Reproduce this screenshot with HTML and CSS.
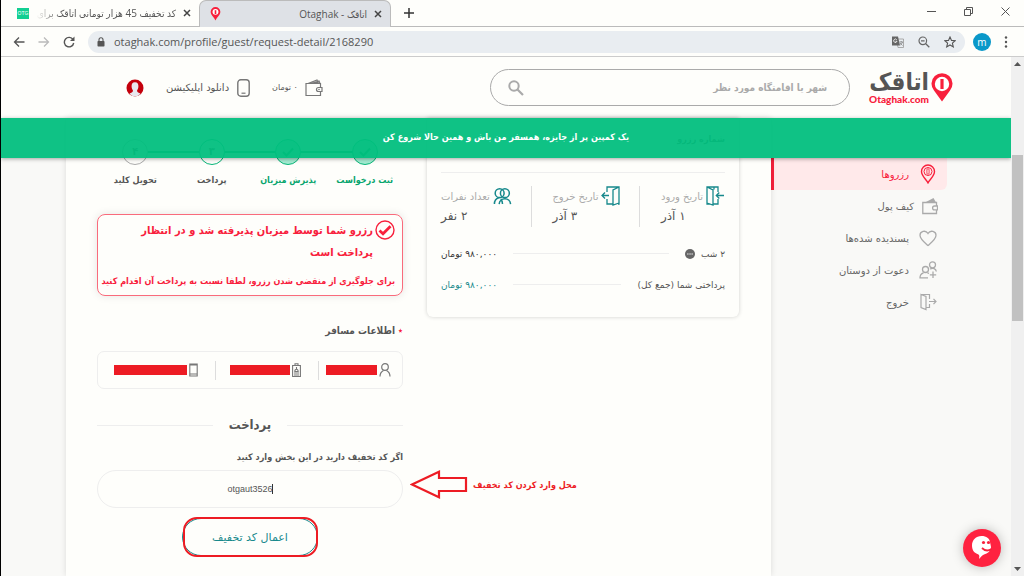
FILE: index.html
```html
<!DOCTYPE html>
<html lang="fa">
<head>
<meta charset="utf-8">
<title>اتاقک - Otaghak</title>
<link rel="stylesheet" href="styles.css">
</head>
<body>
<div class="browser">
  <div class="tabstrip">
    <div class="tab">
      <span class="favicon-otg">OTG</span>
      <span class="tab-title tab-title--fade" dir="rtl">کد تخفیف 45 هزار تومانی اتاقک برای</span>
      <button class="icon-btn" aria-label="Close tab"><svg width="8" height="8" viewBox="0 0 8 8"><path d="M1 1l6 6M7 1l-6 6" stroke="#444" stroke-width="1.5"/></svg></button>
    </div>
    <div class="tab tab--active">
      <svg width="11" height="14" viewBox="0 0 20 26"><path d="M10 25C7 19 1 15 1 9a9 9 0 0 1 18 0c0 6-6 10-9 16z" fill="#f8203c"/><circle cx="10" cy="9" r="5.5" fill="#fff"/><path d="M10 6v7" stroke="#f8203c" stroke-width="3"/></svg>
      <span class="tab-title" dir="rtl">اتاقک - Otaghak</span>
      <button class="icon-btn" aria-label="Close tab"><svg width="8" height="8" viewBox="0 0 8 8"><path d="M1 1l6 6M7 1l-6 6" stroke="#444" stroke-width="1.5"/></svg></button>
    </div>
    <button class="icon-btn new-tab" aria-label="New tab"><svg width="10" height="10" viewBox="0 0 10 10"><path d="M5 0v10M0 5h10" stroke="#333" stroke-width="1.5"/></svg></button>
    <div class="window-controls">
      <button class="icon-btn" aria-label="Minimize"><svg width="9" height="9" viewBox="0 0 9 9"><path d="M0 4.500h9" stroke="#555"/></svg></button>
      <button class="icon-btn" aria-label="Restore"><svg width="9" height="9" viewBox="0 0 9 9"><path d="M.5 2.500h6v6h-6zM2.500 2.500v-2h6v6h-2" fill="none" stroke="#555"/></svg></button>
      <button class="icon-btn" aria-label="Close"><svg width="9" height="9" viewBox="0 0 9 9"><path d="M.5.5l8 8M8.500.5l-8 8" stroke="#555"/></svg></button>
    </div>
  </div>

  <div class="toolbar">
    <button class="icon-btn" aria-label="Back"><svg width="12" height="12" viewBox="0 0 12 12"><path d="M11.500 6H1.500M6 1.500L1.500 6 6 10.500" fill="none" stroke="#555" stroke-width="1.300"/></svg></button>
    <button class="icon-btn" aria-label="Forward"><svg width="12" height="12" viewBox="0 0 12 12"><path d="M.5 6h10M6 1.500L10.500 6 6 10.500" fill="none" stroke="#bbb" stroke-width="1.300"/></svg></button>
    <button class="icon-btn" aria-label="Reload"><svg width="12" height="12" viewBox="0 0 12 12"><path d="M10 3.500A4.700 4.700 0 1 0 10.700 7" fill="none" stroke="#555" stroke-width="1.400"/><path d="M11.500.5V5H7z" fill="#555"/></svg></button>
    <div class="omnibox">
      <svg width="8" height="10" viewBox="0 0 8 10"><rect x=".5" y="4" width="7" height="5.500" rx=".7" fill="#555"/><path d="M2 4.500V2.700a2 2 0 0 1 4 0v1.800" fill="none" stroke="#555" stroke-width="1.100"/></svg>
      <input class="url" type="text" aria-label="Address" value="otaghak.com/profile/guest/request-detail/2168290">
      <div class="omnibox-icons">
        <svg width="12" height="12" viewBox="0 0 12 12"><path d="M4.500 3h7v8.500H6z" fill="none" stroke="#999" stroke-width=".8"/><path d="M0 .5h6L8 9.500H0z" fill="#666"/><path d="M4.800 3.800a1.700 1.700 0 1 0 .2 1.500H3.500" fill="none" stroke="#fff" stroke-width=".8"/><path d="M7.500 6h3.500M9.200 5v1M10.500 6c-.4 1.500-1.500 2.500-2.300 3M8 7l2.500 2.500" fill="none" stroke="#777" stroke-width=".7"/></svg>
        <svg width="12" height="12" viewBox="0 0 12 12"><circle cx="4.800" cy="4.800" r="3.800" fill="none" stroke="#666" stroke-width="1.200"/><path d="M3 4.800h3.600M7.500 7.500L11.300 11.300" stroke="#666" stroke-width="1.300"/></svg>
        <svg width="12" height="12" viewBox="0 0 12 12"><path d="M6 1l1.500 3.400 3.700.3-2.800 2.500.9 3.700L6 9l-3.300 1.900.9-3.700L.8 4.700l3.700-.3z" fill="none" stroke="#555" stroke-width="1.100"/></svg>
      </div>
    </div>
    <button class="profile">m</button>
    <button class="icon-btn" aria-label="Menu"><svg width="4" height="12" viewBox="0 0 4 12"><g fill="#555"><circle cx="2" cy="1.500" r="1.200"/><circle cx="2" cy="6" r="1.200"/><circle cx="2" cy="10.500" r="1.200"/></g></svg></button>
  </div>

  <div class="viewport">
    <div class="page" dir="rtl">
      <header class="site-header">
        <div class="header-start">
          <a class="logo" href="#">
            <svg width="22" height="29" viewBox="0 0 22 29"><path d="M11 28.500L3 17.500A10.500 10.500 0 1 1 19 17.500z" fill="#f8203c"/><circle cx="11" cy="11" r="7.200" fill="#fff"/><path d="M11 6v10" stroke="#f8203c" stroke-width="3.200"/></svg>
            <span class="logo-words"><span class="logo-fa">اتاقک</span><span class="logo-en">Otaghak.com</span></span>
          </a>
          <label class="search">
            <input type="text" aria-label="جستجو" placeholder="شهر یا اقامتگاه مورد نظر">
            <svg width="16" height="16" viewBox="0 0 16 16"><circle cx="6" cy="6" r="4.700" fill="none" stroke="#aaa" stroke-width="2"/><path d="M9.500 9.500l5.500 5.500" stroke="#aaa" stroke-width="2.200"/></svg>
          </label>
        </div>
        <nav class="header-end">
          <a class="header-link header-link--small" href="#"><svg width="18" height="18" viewBox="0 0 18 18"><path d="M15.500 8.500V4.500H1v12h14.500v-4M3 4.500l9-3.500 1.500 3.500M6 4.500L14 2l1 2.500M17 8.500h-3.500a2 2 0 0 0 0 4H17z" fill="none" stroke="#777" stroke-width="1.200"/><circle cx="14" cy="10.500" r=".8" fill="#777"/></svg><span>۰ تومان</span></a>
          <a class="header-link" href="#"><svg width="13" height="18" viewBox="0 0 13 18"><rect x=".8" y=".8" width="11.400" height="16.400" rx="3" fill="none" stroke="#777" stroke-width="1.400"/><path d="M4.500 14.200h4" stroke="#777" stroke-width="1.200"/></svg><span>دانلود اپلیکیشن</span></a>
          <a href="#" aria-label="پروفایل" class="avatar"><svg width="18" height="18" viewBox="0 0 18 18"><circle cx="9" cy="9" r="8.500" fill="#c4000c"/><path d="M9 3.200c-2.700 0-3.600 2-3.400 4.500.1 2 .9 3 1.300 3.500.2 1.500-.4 2.300-3.400 3.400C4.800 16.500 7 17.500 9 17.500s4.200-1 5.500-2.900c-3-1.100-3.600-1.900-3.400-3.400.4-.5 1.200-1.500 1.300-3.500.2-2.500-.7-4.500-3.400-4.500z" fill="#e8e8ee"/></svg></a>
        </nav>
      </header>

      <div class="content">
        <div class="banner">یک کمپین پر از جایزه، همسفر من باش و همین حالا شروع کن</div>

        <nav class="sidebar">
          <a class="side-item side-item--active" href="#"><svg width="18" height="20" viewBox="0 0 18 20"><g fill="none" stroke="currentColor" stroke-width="1.400"><path d="M9 18.800C7 15 2.500 12 2.500 7.500a6.500 6.500 0 0 1 13 0c0 4.500-4.500 7.500-6.500 11.300z"/><circle cx="9" cy="7.500" r="4" stroke-width="1"/><rect x="7.900" y="4.800" width="2.200" height="5.400" rx="1" stroke-width=".8"/></g></svg><span>رزروها</span></a>
          <a class="side-item side-item--wallet" href="#"><svg width="16" height="18" viewBox="0 0 16 18"><path d="M14.500 8.500V5.500H.8v11h13.700v-3M15.500 9h-3a1.900 1.900 0 0 0 0 3.800h3z" fill="none" stroke="#aaa" stroke-width="1.300"/><path d="M3 5.500L11.500 1l2.500 4.500z" fill="#aaa"/></svg><span>کیف پول</span></a>
          <a class="side-item" href="#"><svg width="18" height="18" viewBox="0 0 18 18"><path d="M9 16.500C5 13 1 10 1 6.200 1 2.500 6.500.5 9 4.500c2.500-4 8-2 8 1.700 0 3.800-4 6.800-8 10.300z" fill="none" stroke="#aaa" stroke-width="1.300"/></svg><span>پسندیده شده‌ها</span></a>
          <a class="side-item" href="#"><svg width="18" height="18" viewBox="0 0 18 18"><g fill="none" stroke="#aaa" stroke-width="1.300"><circle cx="6.500" cy="8.500" r="3"/><circle cx="13.500" cy="3.800" r="3"/><path d="M9 16.800H1c0-3 2-4.500 3.500-5M8.500 11.800l1.500.7M11 8c3-1.500 6-.5 6.300 2.500M14 10.500v6.500M10.800 13.800h6.400"/></g></svg><span>دعوت از دوستان</span></a>
          <a class="side-item" href="#"><svg width="18" height="18" viewBox="0 0 18 18"><path d="M2 1.500h8.500V6M2 1.500l5 2v13l-5-2zM7 14.500h3.500V11M10 8.500h7M14.500 5.800L17 8.500l-2.500 2.700" fill="none" stroke="#aaa" stroke-width="1.200"/></svg><span>خروج</span></a>
        </nav>

        <main class="panel">
          <section class="booking">
            <h2 class="booking-no">شماره رزرو</h2>
            <dl class="facts">
              <div class="fact"><dt><svg width="19" height="20" viewBox="0 0 19 20"><path d="M8 3.500V1H1v17h3M1 1l6 3v15l-6-2M8 1h4v5M12 13v5H7M18 9.500H10M13.300 6.500l-3 3 3 3" fill="none" stroke="#17898c" stroke-width="1.300"/></svg>تاریخ ورود</dt><dd>۱ آذر</dd></div>
              <div class="fact"><dt><svg width="19" height="20" viewBox="0 0 19 20"><path d="M6 6V1h12v17h-1M18 1l-6 3v15l6-2M6 13v5h6M.8 9.500H8M4 6.500l-3 3 3 3" fill="none" stroke="#17898c" stroke-width="1.300"/></svg>تاریخ خروج</dt><dd>۳ آذر</dd></div>
              <div class="fact"><dt><svg width="19" height="20" viewBox="0 0 20 20"><g fill="none" stroke="#17898c" stroke-width="1.600"><circle cx="7" cy="7" r="4.700"/><circle cx="12.500" cy="7" r="4.700"/><path d="M1.500 18.500c0-4 2-6 4.500-6.500M6.500 18.500c.5-7.500 11.500-7.500 12 0M10 18.500c0-2-.6-4-1.800-5.300"/></g></svg>تعداد نفرات</dt><dd>۲ نفر</dd></div>
            </dl>
            <div class="price"><span>۲ شب</span><button class="more" aria-label="جزئیات"><svg width="10" height="10" viewBox="0 0 10 10"><circle cx="5" cy="5" r="5" fill="#666"/><path d="M2.200 5h1.300M4.400 5h1.300M6.500 5h1.300" stroke="#fff" stroke-width="1.200"/></svg></button><i class="rule"></i><b>۹۸۰,۰۰۰ تومان</b></div>
            <div class="price price--total"><span>پرداختی شما (جمع کل)</span><i class="rule"></i><b>۹۸۰,۰۰۰ تومان</b></div>
          </section>

          <section class="checkout">
            <ol class="steps">
              <li class="step step--done"><span class="dot"><svg width="12" height="10" viewBox="0 0 12 10"><path d="M1 5l3.500 3.500L11 1.500" fill="none" stroke="#08a56d" stroke-width="2"/></svg></span>ثبت درخواست</li>
              <li class="step step--done"><span class="dot"><svg width="12" height="10" viewBox="0 0 12 10"><path d="M1 5l3.500 3.500L11 1.500" fill="none" stroke="#08a56d" stroke-width="2"/></svg></span>پذیرش میزبان</li>
              <li class="step step--current"><span class="dot">۳</span>پرداخت</li>
              <li class="step"><span class="dot">۴</span>تحویل کلید</li>
            </ol>

            <div class="notice">
              <div class="notice-head">
                <svg width="20" height="20" viewBox="0 0 20 20"><circle cx="10" cy="10" r="9" fill="none" stroke="#f8203c" stroke-width="1.400"/><path d="M4.500 10.500l3.500 3.200 7.500-7.500" fill="none" stroke="#f8203c" stroke-width="2.800"/></svg>
                <h3>رزرو شما توسط میزبان پذیرفته شد و در انتظار پرداخت است</h3>
              </div>
              <p>برای جلوگیری از منقضی شدن رزرو، لطفا نسبت به پرداخت آن اقدام کنید</p>
            </div>

            <h4 class="guest-title"><span class="star">٭</span> اطلاعات مسافر</h4>
            <div class="guest">
              <div class="guest-cell"><svg width="12" height="14" viewBox="0 0 12 14"><circle cx="6" cy="4" r="3.300" fill="none" stroke="#777" stroke-width="1.200"/><path d="M1 13.500c0-3.500 1.500-5 3.500-6M11 13.500c0-3.500-1.500-5-3.500-6" fill="none" stroke="#777" stroke-width="1.200"/></svg><span class="redact redact--short"></span></div>
              <div class="guest-cell"><svg width="9" height="14" viewBox="0 0 9 14"><path d="M.6 2.500h7.800v11H.6zM3 2.500V.8h3v1.700M2 10h5M2 12h5M4.500 4v2M2.800 8.500c0-3 3.400-3 3.400 0z" fill="none" stroke="#777" stroke-width="1.100"/></svg><span class="redact redact--mid"></span></div>
              <div class="guest-cell"><svg width="9" height="14" viewBox="0 0 9 14"><path d="M.8 1h7.400v12H.8zM.8 2h7.400M.8 11h7.400" fill="none" stroke="#777" stroke-width="1.100"/></svg><span class="redact redact--long"></span></div>
            </div>

            <h3 class="pay-title"><span>پرداخت</span></h3>
            <label class="code-label" for="code">اگر کد تخفیف دارید در این بخش وارد کنید</label>
            <div class="code-box">
              <input id="code" class="code" type="text" value="otgaut3526" dir="ltr">
              <i class="caret"></i>
              <div class="callout">
                <span>محل وارد کردن کد تخفیف</span>
                <svg width="58" height="29" viewBox="0 0 58 29"><path d="M2 14.500L29 1.800V8h27v13H29v6.200z" fill="none" stroke="#ed1c24" stroke-width="2.200"/></svg>
              </div>
            </div>
            <div class="apply-wrap"><button class="apply">اعمال کد تخفیف</button></div>
          </section>
        </main>
      </div>

      <button class="chat" aria-label="گفتگو"><svg width="22" height="26" viewBox="0 0 22 26"><path d="M10.500 1c5 0 8 2.500 8.500 6l1 5c0 4-3.500 6.500-7 7.500-2 .7-3 2.500-5 4.500.5-2.500.5-3.800-.5-4.500C3 18 1 15 1 10.500 1 5 5 1 10.500 1z" fill="#fff"/><path d="M11 13c3 3 6.500 3 9.500 1" fill="none" stroke="#f8203c" stroke-width="1.800"/><circle cx="12.500" cy="7.500" r="1.600" fill="#f8203c"/><circle cx="17.500" cy="7.500" r="1.600" fill="#f8203c"/></svg></button>
    </div>
    <div class="scrollbar">
      <svg width="7" height="4" viewBox="0 0 7 4"><path d="M3.500 0L7 4H0z" fill="#555"/></svg>
      <div class="track"><div class="thumb"></div></div>
      <svg width="7" height="4" viewBox="0 0 7 4"><path d="M3.500 4L7 0H0z" fill="#555"/></svg>
    </div>
  </div>
</div>
</body>
</html>
```
FILE: styles.css
```css
* { box-sizing: border-box; }
body, h2, h3, h4, p, dl, dd, ol { margin: 0; padding: 0; }
body { font-family: "DejaVu Sans", sans-serif; font-size: 9px; color: #555; }
button { font: inherit; border: 0; background: none; padding: 0; }
input { font: inherit; border: 0; background: none; padding: 0; outline: 0; min-width: 0; }
a { color: inherit; text-decoration: none; }
svg { display: block; flex: none; }
.icon-btn { display: flex; }

.browser { display: flex; flex-direction: column; height: 100vh; overflow: hidden; background: #fefefb; border-left: 1px solid #000; }

/* Browser chrome */
.tabstrip { display: flex; align-items: center; height: 27px; flex: none; border-bottom: 1px solid #bbb; }
.tab { display: flex; align-items: center; gap: 7px; width: 198px; height: 27px; padding: 0 8px 0 16px; }
.tab--active { width: 192px; padding: 0 8px 0 10px; background: #dee1e6; border: 1px solid #bbb; border-bottom: 0; border-radius: 7px 7px 0 0; }
.tab-title { flex: 1; overflow: hidden; white-space: nowrap; font-family: "Open Sans", "DejaVu Sans Condensed", "DejaVu Sans", sans-serif; font-size: 10px; }
.tab-title--fade { mask-image: linear-gradient(to right, transparent, #000 24px); }
.favicon-otg { width: 12px; height: 11px; background: #12cf92; color: #fff; font: 5px/11px "Liberation Sans", sans-serif; text-align: center; }
.new-tab { margin-left: 13px; }
.window-controls { display: flex; gap: 28px; margin-left: auto; padding: 0 14px 4px 0; }
.toolbar { display: flex; align-items: center; gap: 13px; height: 30px; flex: none; padding: 0 16px 0 12px; border-bottom: 1px solid #ccc; }
.omnibox { display: flex; flex: 1; align-items: center; gap: 9px; height: 22px; padding: 0 9px; border-radius: 11px; background: #e9edf1; }
.url { flex: 1; font-family: "Open Sans", sans-serif; font-size: 11px; color: #555; }
.omnibox-icons { display: flex; gap: 14px; }
.profile { width: 18px; height: 18px; margin-left: -5px; border-radius: 50%; background: #0a98c9; color: #fff; font: 10px/16px "Open Sans", sans-serif; }

/* Viewport and scrollbar */
.viewport { display: flex; flex: 1; min-height: 0; }
.page { position: relative; display: flex; flex-direction: column; flex: 1; min-width: 0; overflow: hidden; background: #f9f9f7; }
.scrollbar { display: flex; flex-direction: column; align-items: center; width: 13px; padding: 5px 0; background: #f0f0f0; }
.track { flex: 1; align-self: stretch; padding: 89px 1px 0; }
.thumb { height: 166px; background: #c1c1c1; }

/* Site header */
.site-header { display: flex; justify-content: space-between; align-items: center; flex: none; height: 61px; padding: 0 58px 0 125px; background: #fefefb; }
.header-start, .header-end { display: flex; align-items: center; }
.header-start { gap: 19px; }
.header-end { gap: 22px; }
.logo { display: flex; align-items: center; gap: 2px; }
.logo-words { display: flex; flex-direction: column; align-items: flex-start; }
.logo-fa { font-family: "DejaVu Sans Condensed", "DejaVu Sans", sans-serif; font-size: 24px; line-height: 22px; font-weight: bold; color: #555; }
.logo-en { font-family: Lato, sans-serif; font-size: 10px; line-height: 12px; font-weight: 900; color: #f8203c; }
.search { display: flex; align-items: center; width: 360px; height: 37px; padding: 0 22px 0 17px; border: 1px solid #aaa; border-radius: 19px; }
.search input { flex: 1; font-family: "DejaVu Sans Condensed", "DejaVu Sans", sans-serif; font-size: 10px; font-weight: bold; }
.search input::placeholder { color: #aaa; opacity: 1; }
.header-link { display: flex; align-items: center; gap: 8px; font-size: 10px; }
.header-link--small { gap: 7px; font-size: 8px; }

/* Content */
.content { position: relative; display: flex; flex: 1; min-height: 0; }
.banner, .booking-no, .steps, .notice, .guest-title, .pay-title, .code-label, .callout { font-family: "DejaVu Sans Condensed", "DejaVu Sans", sans-serif; }
.banner { position: absolute; top: 0; left: 0; right: 0; z-index: 2; height: 40px; background: rgba(0, 190, 125, .94); box-shadow: 0 1px 4px rgba(0, 0, 0, .35); color: #fff; font-size: 9px; line-height: 38px; font-weight: bold; text-align: center; }
.sidebar { flex: 0 0 240px; padding: 40px 64px 0 0; }
.side-item { display: flex; align-items: center; gap: 10px; height: 32px; padding-right: 10px; font-size: 10px; color: #666; }
.side-item--wallet { gap: 8px; padding-right: 9px; }
.side-item--active { color: #f8203c; background: #ffe9ea; border-left: 3px solid #f8203c; border-radius: 0 0 6px 0; }
.panel { display: grid; grid-template-columns: minmax(0, 312fr) minmax(0, 306fr); gap: 24px; align-items: start; flex: 1; min-width: 0; margin-left: 65px; padding: 0 32px 0 31px; background: #fefefb; box-shadow: 0 0 6px rgba(0, 0, 0, .12); }

/* Booking summary */
.booking { padding: 12px 14px 17px; border-radius: 0 0 6px 6px; box-shadow: 0 0 4px rgba(0, 0, 0, .18); }
.booking-no { padding-bottom: 24px; border-bottom: 1px solid #eee; font-size: 9px; line-height: 18px; }
.facts { display: flex; justify-content: space-between; padding: 13px 0 11px; }
.fact { height: 41px; }
.fact + .fact { padding-right: 19px; border-right: 1px solid #ddd; }
.fact dt { display: flex; align-items: center; gap: 3px; height: 20px; font-size: 10px; color: #aaa; white-space: nowrap; }
.fact dd { font-size: 12px; line-height: 20px; text-align: left; }
.price { display: flex; align-items: center; gap: 6px; height: 31px; white-space: nowrap; }
.price b { color: #333; font-weight: normal; }
.price--total b { color: #17898c; }
.rule { flex: 1; height: 1px; margin: 0 10px; background: #eee; }

/* Checkout column */
.steps { display: grid; grid-template-columns: repeat(4, 1fr); padding-top: 21px; list-style: none; }
.step { position: relative; display: flex; flex-direction: column; align-items: center; gap: 6px; font-size: 9px; line-height: 18px; font-weight: bold; white-space: nowrap; }
.step + .step::before { content: ""; position: absolute; top: 12px; left: calc(50% + 13px); width: calc(100% - 26px); height: 2px; background: #08a56d; }
.dot { display: flex; align-items: center; justify-content: center; width: 26px; height: 26px; border: 1px solid #aaa; border-radius: 50%; font-size: 11px; }
.step--done { color: #08a56d; }
.step--done .dot { background: #a3ecd2; border-color: #08b578; }
.step--current .dot { border-color: #08b578; }
.notice { margin-top: 25px; padding: 5px 7px; border: 1px solid #f96b7c; border-radius: 8px; box-shadow: 0 0 8px rgba(0, 0, 0, .1); color: #f8203c; }
.notice-head { display: flex; align-items: flex-start; gap: 2px; }
.notice h3 { flex: 1; font-size: 11px; line-height: 22px; }
.notice p { margin-top: 8px; font-size: 9px; line-height: 18px; font-weight: bold; white-space: nowrap; }
.guest-title { margin-top: 26px; font-size: 10px; line-height: 18px; }
.star { color: #f8203c; }
.guest { display: grid; grid-template-columns: 84fr 103fr 119fr; align-items: center; margin-top: 11px; height: 38px; border: 1px solid #eee; border-radius: 7px; }
.guest-cell { display: flex; align-items: center; gap: 2px; height: 19px; padding-right: 11px; }
.guest-cell + .guest-cell { padding-right: 17px; border-right: 1px solid #ddd; }
.redact { height: 10px; background: #ed1c24; }
.redact--short { width: 51px; }
.redact--mid { width: 60px; }
.redact--long { width: 73px; }
.pay-title { display: flex; align-items: center; gap: 16px; margin-top: 24px; font-size: 13px; line-height: 24px; }
.pay-title::before, .pay-title::after { content: ""; flex: 1; height: 1px; background: #eee; }
.code-label { display: block; margin-top: 11px; font-size: 9px; line-height: 18px; font-weight: bold; }
.code-box { position: relative; margin-top: 4px; }
.code { display: block; width: 100%; height: 38px; border: 1px solid #eee; border-radius: 19px; font-family: "Liberation Sans", sans-serif; font-size: 9px; color: #555; text-align: center; }
.caret { position: absolute; top: 14px; left: calc(50% + 22px); width: 1px; height: 10px; background: #333; }
.callout { position: absolute; top: 0; left: calc(100% + 7px); display: flex; align-items: center; gap: 5px; color: #ed1c24; font-weight: bold; white-space: nowrap; }
.apply-wrap { position: relative; width: 136px; margin: 10px auto 0; }
.apply-wrap::after { content: ""; position: absolute; inset: -1px 0 -1px 1px; border: 2px solid #ed1c24; border-radius: 14px; pointer-events: none; }
.apply { width: 100%; height: 38px; border: 1px solid #17898c; border-radius: 19px; color: #17898c; font-size: 11px; }

.chat { position: absolute; right: 10px; bottom: 9px; z-index: 3; display: flex; align-items: center; justify-content: center; width: 38px; height: 38px; border-radius: 50%; background: #ff2240; box-shadow: 0 0 12px rgba(0, 0, 0, .25); }
```
